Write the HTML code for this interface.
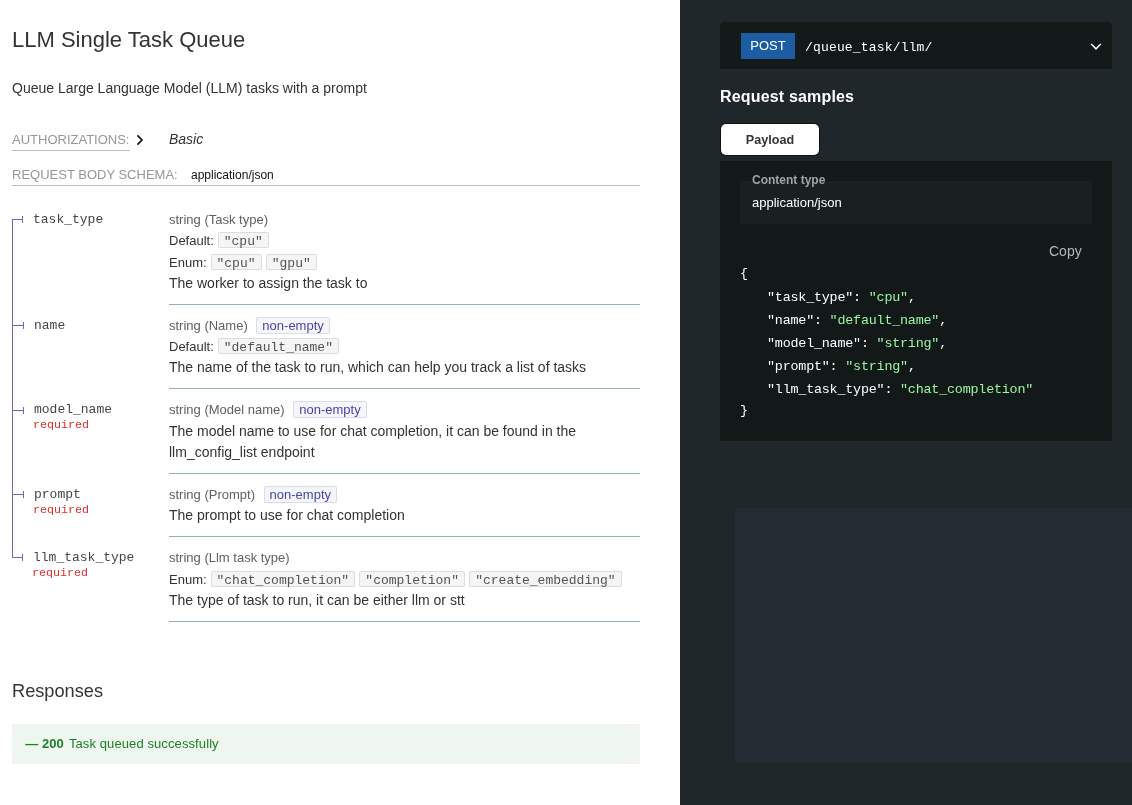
<!DOCTYPE html>
<html>
<head>
<meta charset="utf-8">
<title>LLM Single Task Queue</title>
<style>
*{box-sizing:border-box;}
html,body{margin:0;padding:0;}
body{width:1132px;height:805px;overflow:hidden;position:relative;background:linear-gradient(to right,#fff 0,#fff 680px,#20272a 680px,#20272a 100%);
  font-family:"Liberation Sans",sans-serif;font-size:14px;line-height:21px;color:#333;}
.abs{position:absolute;white-space:nowrap;}
.mono{font-family:"Liberation Mono",monospace;}
/* left */
#left{position:absolute;left:0;top:0;width:680px;height:805px;will-change:transform;}
h2.title{position:absolute;left:12px;top:24px;margin:0;font-size:22px;line-height:32px;font-weight:400;color:#333;white-space:nowrap;}
.desc{left:12px;top:78px;}
.auth{left:12px;top:129px;font-size:13px;color:#929899;text-transform:uppercase;}
.authline{position:absolute;left:12px;top:150px;width:118px;height:1px;background:#bbbfc0;}
.basic{left:169px;top:129px;font-style:italic;color:#333;}
.rbs{left:12px;top:164px;font-size:13px;color:#929899;text-transform:uppercase;}
.ctype{left:191px;top:165px;font-size:12px;color:#111;}
.rbsline{position:absolute;left:12px;top:185px;width:628px;height:1px;background:#bbbfc0;}
.tree{position:absolute;left:12px;top:219px;width:1px;height:339px;background:#6a6ab0;}
.tick{position:absolute;left:13px;width:10px;height:1px;background:#6a6ab0;}
.tickend{position:absolute;left:23px;width:1px;height:7px;background:#6a6ab0;}
.fname{left:34px;font-family:"Liberation Mono",monospace;font-size:13px;color:#454545;line-height:20px;}
.req{left:33px;font-family:"Liberation Mono",monospace;font-size:11.7px;color:#d9302d;line-height:14px;}
.row{left:169px;line-height:21px;}
.type{color:#606060;font-size:13px;}
.lbl{color:#333;font-size:13px;}
.sm{font-size:13px;}
.code{font-family:"Liberation Mono",monospace;font-size:13px;color:rgba(51,51,51,0.84);background:rgba(51,51,51,0.05);border:1px solid rgba(51,51,51,0.12);border-radius:2px;padding:0 5px;line-height:17px;height:16px;display:inline-block;vertical-align:top;margin:2px 0.3px 0 0.3px;overflow:visible;}
.cons{font-size:13px;color:rgba(50,50,159,0.9);background:rgba(50,50,159,0.05);border:1px solid rgba(50,50,159,0.13);border-radius:2px;padding:0 5px;line-height:15px;height:17px;display:inline-block;vertical-align:middle;margin:0 0 0 5px;position:relative;top:-1px;}
.sep{position:absolute;left:169px;width:471px;height:1px;background:#96adbb;}
.resp-h{left:12px;top:678px;font-size:18.2px;line-height:26px;color:#333;}
.resp{position:absolute;left:12px;top:724px;width:628px;height:40px;background:#eff6f0;border-radius:2px;color:#1d8127;padding:9px 10px;font-size:13px;line-height:21px;white-space:nowrap;}
.resp .dash{display:inline-block;width:19.5px;text-align:center;font-weight:700;}
/* right */
#right{position:absolute;left:680px;top:0;width:452px;height:805px;will-change:transform;}
.ep{position:absolute;left:40px;top:22px;width:392px;height:47px;background:#131819;border-radius:4px 4px 0 0;}
.post{position:absolute;left:21px;top:11px;width:54px;height:26px;background:#1c5ca3;color:#fff;font-size:13px;line-height:26px;text-align:center;}
.path{left:85px;top:16px;font-family:"Liberation Mono",monospace;font-size:13px;color:#fff;line-height:20px;letter-spacing:0.17px;}
.rs{left:40px;top:85px;font-size:16px;font-weight:700;color:#fff;line-height:24px;letter-spacing:0.17px;}
.tab{position:absolute;left:41px;top:124px;width:98px;height:31px;background:#fff;border-radius:5px;box-shadow:0 0 0 1px #0d1113;color:#333;font-weight:700;font-size:12.6px;line-height:33px;text-align:center;}
.panel{position:absolute;left:40px;top:161px;width:392px;height:280px;background:#131819;}
.ctbox{position:absolute;left:20px;top:20px;width:352px;height:43px;background:#1a1f22;}
.ctlabel{left:32px;top:10px;font-size:12px;font-weight:700;color:#a0a4a6;line-height:18px;}
.ctval{left:32px;top:32px;font-size:13px;color:#fff;line-height:20px;}
.copy{left:329px;top:80px;font-size:14px;color:#b4b7b9;line-height:20px;}
.jl{position:absolute;white-space:pre;font-family:"Liberation Mono",monospace;font-size:13.4px;line-height:23px;color:#fff;letter-spacing:-0.21px;}
.jl.k{left:47px;}
.jl .s{color:#95f7a1;}
.ghost{position:absolute;left:55px;top:508px;width:397px;height:254px;background:#252b32;}
</style>
</head>
<body>
<div id="left">
  <h2 class="title">LLM Single Task Queue</h2>
  <div class="abs desc">Queue Large Language Model (LLM) tasks with a prompt</div>
  <div class="abs auth">Authorizations:</div>
  <svg class="abs" style="left:133.5px;top:133px" width="13" height="14" viewBox="0 0 13 14"><path d="M3.4 2.4 L8 7 L3.4 11.6" fill="none" stroke="#111" stroke-width="1.7"/></svg>
  <div class="authline"></div>
  <div class="abs basic">Basic</div>
  <div class="abs rbs">Request Body schema:</div>
  <div class="abs ctype">application/json</div>
  <div class="rbsline"></div>

  <div class="tree"></div>

  <!-- task_type -->
  <div class="tick" style="top:219px;left:12px"></div><div class="tickend" style="top:216px;left:22px"></div>
  <div class="abs fname" style="top:210px;left:33px">task_type</div>
  <div class="abs row type" style="top:209px">string (Task type)</div>
  <div class="abs row sm" style="top:230px"><span class="lbl">Default:</span> <span class="code">"cpu"</span></div>
  <div class="abs row sm" style="top:252px"><span class="lbl">Enum:</span> <span class="code">"cpu"</span> <span class="code">"gpu"</span></div>
  <div class="abs row" style="top:273px">The worker to assign the task to</div>
  <div class="sep" style="top:304px"></div>

  <!-- name -->
  <div class="tick" style="top:325px"></div><div class="tickend" style="top:322px"></div>
  <div class="abs fname" style="top:316px">name</div>
  <div class="abs row type" style="top:315px">string (Name) <span class="cons">non-empty</span></div>
  <div class="abs row sm" style="top:336px"><span class="lbl">Default:</span> <span class="code">"default_name"</span></div>
  <div class="abs row" style="top:357px">The name of the task to run, which can help you track a list of tasks</div>
  <div class="sep" style="top:388px"></div>

  <!-- model_name -->
  <div class="tick" style="top:410px"></div><div class="tickend" style="top:407px"></div>
  <div class="abs fname" style="top:400px">model_name</div>
  <div class="abs req" style="top:418px">required</div>
  <div class="abs row type" style="top:399px">string (Model name) <span class="cons">non-empty</span></div>
  <div class="abs row" style="top:421px">The model name to use for chat completion, it can be found in the</div>
  <div class="abs row" style="top:442px">llm_config_list endpoint</div>
  <div class="sep" style="top:473px"></div>

  <!-- prompt -->
  <div class="tick" style="top:494px"></div><div class="tickend" style="top:491px"></div>
  <div class="abs fname" style="top:485px">prompt</div>
  <div class="abs req" style="top:503px">required</div>
  <div class="abs row type" style="top:484px">string (Prompt) <span class="cons">non-empty</span></div>
  <div class="abs row" style="top:505px">The prompt to use for chat completion</div>
  <div class="sep" style="top:536px"></div>

  <!-- llm_task_type -->
  <div class="tick" style="top:557px;left:12px"></div><div class="tickend" style="top:554px;left:22px"></div>
  <div class="abs fname" style="top:548px;left:33px">llm_task_type</div>
  <div class="abs req" style="top:566px;left:32px">required</div>
  <div class="abs row type" style="top:547px">string (Llm task type)</div>
  <div class="abs row sm" style="top:569px"><span class="lbl">Enum:</span> <span class="code">"chat_completion"</span> <span class="code">"completion"</span> <span class="code">"create_embedding"</span></div>
  <div class="abs row" style="top:590px">The type of task to run, it can be either llm or stt</div>
  <div class="sep" style="top:621px"></div>

  <div class="abs resp-h">Responses</div>
  <div class="resp"><span class="dash">—</span><b style="margin-left:0.5px">200 </b><span style="margin-left:1.6px;letter-spacing:0.1px">Task queued successfully</span></div>
</div>

<div id="right">
  <div class="ep">
    <div class="post">POST</div>
    <div class="abs path">/queue_task/llm/</div>
    <svg class="abs" style="left:369px;top:18.6px" width="14" height="12" viewBox="0 0 14 12"><path d="M2.2 3 L7 7.8 L11.8 3" fill="none" stroke="#fff" stroke-width="1.6"/></svg>
  </div>
  <div class="abs rs">Request samples</div>
  <div class="tab">Payload</div>
  <div class="panel">
    <div class="ctbox"></div>
    <div class="abs ctlabel">Content type</div>
    <div class="abs ctval">application/json</div>
    <div class="abs copy">Copy</div>
<div class="json">
      <div class="jl" style="top:101px;left:20px">{</div>
      <div class="jl k" style="top:125px">"task_type": <span class="s">"cpu"</span>,</div>
      <div class="jl k" style="top:148px">"name": <span class="s">"default_name"</span>,</div>
      <div class="jl k" style="top:171px">"model_name": <span class="s">"string"</span>,</div>
      <div class="jl k" style="top:194px">"prompt": <span class="s">"string"</span>,</div>
      <div class="jl k" style="top:217px">"llm_task_type": <span class="s">"chat_completion"</span></div>
      <div class="jl" style="top:238px;left:20px">}</div>
    </div>
  </div>
  <div class="ghost"></div>
</div>
</body>
</html>
